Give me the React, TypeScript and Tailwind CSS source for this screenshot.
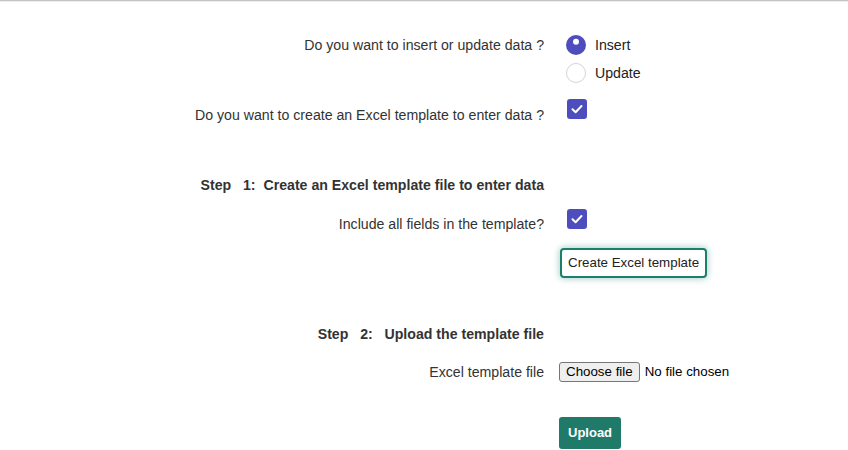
import React from "react";

function Check() {
  return (
    <div className="flex h-5 w-5 items-center justify-center rounded-[3px] bg-[#4d4dbd]">
      <svg width="20" height="20" viewBox="0 0 20 20" fill="none">
        <path d="M5.5 10.3 L8.6 13.2 L14.5 7" stroke="white" strokeWidth="2" strokeLinecap="round" strokeLinejoin="round" />
      </svg>
    </div>
  );
}

function Radio({ checked }: { checked: boolean }) {
  return checked ? (
    <svg width="20" height="20" viewBox="0 0 20 20">
      <circle cx="10" cy="10" r="10" fill="#4d4dbd" />
      <circle cx="10" cy="6.8" r="3" fill="white" />
    </svg>
  ) : (
    <svg width="20" height="20" viewBox="0 0 20 20">
      <circle cx="10" cy="10" r="9.5" fill="white" stroke="#d4d4d4" strokeWidth="1" />
    </svg>
  );
}

export default function App() {
  return (
    <div className="h-[450px] w-full overflow-hidden bg-white text-[14.15px] leading-5 text-[#333]" style={{ fontFamily: '"Liberation Sans", Arial, sans-serif' }}>
      <div className="h-px bg-[#c4c4c4]" />
      <div className="h-px bg-[#ededed]" />

      {/* Row 1 */}
      <div className="mt-[33px] flex">
        <div className="w-[544px] text-right">Do you want to insert or update data ?</div>
        <div className="ml-[22px] flex flex-col gap-[8px]">
          <div className="flex h-5 items-center gap-[9px] text-[#222]">
            <Radio checked />
            <span>Insert</span>
          </div>
          <div className="flex h-5 items-center gap-[9px] text-[#222]">
            <Radio checked={false} />
            <span>Update</span>
          </div>
        </div>
      </div>

      {/* Row 2 */}
      <div className="mt-[16px] flex">
        <div className="w-[544px] pt-[6px] text-right">Do you want to create an Excel template to enter data ?</div>
        <div className="ml-[23px]">
          <Check />
        </div>
      </div>

      {/* Step 1 */}
      <div className="mt-[50px] flex">
        <div className="w-[544px] whitespace-pre text-right font-bold">{"Step   1:  Create an Excel template file to enter data"}</div>
      </div>

      <div className="mt-[14px] flex">
        <div className="w-[544px] pt-[5px] text-right">Include all fields in the template?</div>
        <div className="ml-[23px]">
          <Check />
        </div>
      </div>

      <div className="mt-[14px] flex">
        <div className="w-[544px]" />
        <div className="ml-[16px]">
          <button className="h-[30px] rounded-[4px] border-2 border-[#1a7f6b] bg-white px-[6px] text-[13.33px] text-[#222] shadow-[0_0_6px_1px_rgba(26,127,107,0.35)]">
            Create Excel template
          </button>
        </div>
      </div>

      {/* Step 2 */}
      <div className="mt-[46px] flex">
        <div className="w-[544px] whitespace-pre text-right font-bold">{"Step   2:   Upload the template file"}</div>
      </div>

      <div className="mt-[18px] flex">
        <div className="w-[544px] text-right">Excel template file</div>
        <div className="ml-[15px] flex items-center gap-[5px] text-[13.33px]">
          <button className="h-5 rounded-[3px] border border-[#767676] bg-[#efefef] px-[6px] text-[13.33px] leading-[18px] text-black">
            Choose file
          </button>
          <span className="text-black">No file chosen</span>
        </div>
      </div>

      <div className="mt-[35px] flex">
        <div className="w-[544px]" />
        <div className="ml-[15px]">
          <button className="h-8 rounded-[3px] bg-[#1f7a6a] px-[9px] text-[13px] font-semibold text-white">
            Upload
          </button>
        </div>
      </div>
    </div>
  );
}
